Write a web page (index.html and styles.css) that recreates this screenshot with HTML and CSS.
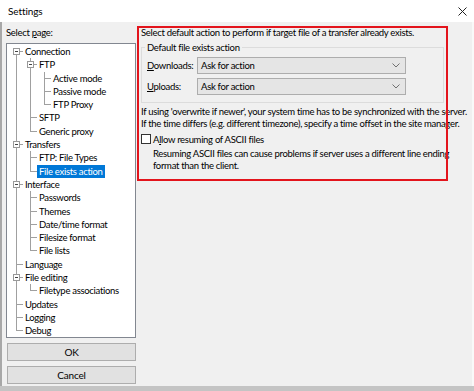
FILE: index.html
```html
<!DOCTYPE html>
<html>
<head>
<meta charset="utf-8">
<title>Settings</title>
<link rel="stylesheet" href="styles.css">
</head>
<body>
<div class="window">
  <div class="titlebar">
    <span class="title">Settings</span>
    <svg class="close" width="9" height="9" viewBox="0 0 9 9"><path d="M0.5 0.5 L8.5 8.5 M8.5 0.5 L0.5 8.5" stroke="#222" stroke-width="1" fill="none"/></svg>
  </div>
  <div class="main">
    <div class="sidebar">
      <div class="side-label">Select <u>p</u>age:</div>
      <div class="tree">
        <ul class="root">
          <li><span class="toggle"></span><span class="node">Connection</span>
            <ul>
              <li><span class="toggle"></span><span class="node">FTP</span>
                <ul>
                  <li><span class="node">Active mode</span></li>
                  <li><span class="node">Passive mode</span></li>
                  <li><span class="node">FTP Proxy</span></li>
                </ul>
              </li>
              <li><span class="node">SFTP</span></li>
              <li><span class="node">Generic proxy</span></li>
            </ul>
          </li>
          <li><span class="toggle"></span><span class="node">Transfers</span>
            <ul>
              <li><span class="node">FTP: File Types</span></li>
              <li><span class="node selected">File exists action</span></li>
            </ul>
          </li>
          <li><span class="toggle"></span><span class="node">Interface</span>
            <ul>
              <li><span class="node">Passwords</span></li>
              <li><span class="node">Themes</span></li>
              <li><span class="node">Date/time format</span></li>
              <li><span class="node">Filesize format</span></li>
              <li><span class="node">File lists</span></li>
            </ul>
          </li>
          <li><span class="node">Language</span></li>
          <li><span class="toggle"></span><span class="node">File editing</span>
            <ul>
              <li><span class="node">Filetype associations</span></li>
            </ul>
          </li>
          <li><span class="node">Updates</span></li>
          <li><span class="node">Logging</span></li>
          <li><span class="node">Debug</span></li>
        </ul>
      </div>
      <button class="btn">OK</button>
      <button class="btn">Cancel</button>
    </div>
    <div class="content">
      <p class="intro">Select default action to perform if target file of a transfer already exists.</p>
      <fieldset class="group">
        <legend>Default file exists action</legend>
        <div class="field-row">
          <span class="field-label"><u>D</u>ownloads:</span>
          <div class="select"><span>Ask for action</span><svg class="chev" width="8" height="5" viewBox="0 0 8 5"><path d="M0.5 0.5 L4 4 L7.5 0.5" stroke="#707070" stroke-width="1" fill="none"/></svg></div>
        </div>
        <div class="field-row">
          <span class="field-label"><u>U</u>ploads:</span>
          <div class="select"><span>Ask for action</span><svg class="chev" width="8" height="5" viewBox="0 0 8 5"><path d="M0.5 0.5 L4 4 L7.5 0.5" stroke="#707070" stroke-width="1" fill="none"/></svg></div>
        </div>
      </fieldset>
      <p class="note">If using 'overwrite if newer', your system time has to be synchronized with the server.<br>If the time differs (e.g. different timezone), specify a time offset in the site manager.</p>
      <div class="check-row"><span class="checkbox"></span><span>A<u>l</u>low resuming of ASCII files</span></div>
      <p class="check-note">Resuming ASCII files can cause problems if server uses a different line ending<br>format than the client.</p>
      <div class="highlight"></div>
    </div>
  </div>
  <div class="bottom-edge"></div>
</div>
</body>
</html>
```

FILE: styles.css
```css
html, body {
  margin: 0;
  padding: 0;
}
body {
  width: 474px;
  height: 391px;
  overflow: hidden;
  font-family: Lato, "Noto Sans", sans-serif;
  font-size: 9.5px;
  letter-spacing: -0.3px;
  color: #000;
  background: #f0f0f0;
}
.window {
  display: flex;
  flex-direction: column;
  height: 391px;
}
.titlebar {
  height: 22px;
  background: #fff;
  display: flex;
  align-items: center;
  justify-content: space-between;
  padding: 0 7px 0 8px;
  flex: none;
}
.title {
  font-size: 10px;
  letter-spacing: -0.1px;
}
.close {
  display: block;
}
.main {
  flex: 1;
  display: flex;
  background: #f0f0f0;
  border-left: 2px solid #a8a8a8;
  border-right: 2px solid #f9f9f9;
  overflow: hidden;
}
.sidebar {
  width: 130px;
  margin-left: 4px;
  display: flex;
  flex-direction: column;
  flex: none;
}
.side-label {
  line-height: 13px;
  padding-top: 4px;
  height: 13px;
  margin-bottom: 4px;
}
.tree {
  height: 295px;
  box-sizing: border-box;
  background: #fff;
  border: 1px solid #828790;
  padding-top: 1px;
  overflow: hidden;
}
.tree ul {
  list-style: none;
  margin: 0;
  padding: 0 0 0 14px;
}
.tree ul.root {
  padding-left: 9px;
}
.tree li {
  position: relative;
  white-space: nowrap;
  line-height: 13.3px;
}
.tree li::before {
  content: "";
  position: absolute;
  left: 0;
  top: 0;
  width: 6px;
  height: 6px;
  border-left: 1px solid #a0a0a0;
  border-bottom: 1px solid #a0a0a0;
}
.tree ul.root > li:first-child::before {
  border-left-color: transparent;
}
.tree li:not(:last-child)::after {
  content: "";
  position: absolute;
  left: 0;
  top: 6px;
  bottom: 0;
  border-left: 1px solid #a0a0a0;
}
.toggle {
  position: absolute;
  left: -3px;
  top: 3px;
  width: 7px;
  height: 7px;
  box-sizing: border-box;
  border: 1px solid #999;
  background: #fff;
  z-index: 1;
}
.toggle::after {
  content: "";
  position: absolute;
  left: 1px;
  top: 2px;
  width: 3px;
  height: 1px;
  background: #444;
}
.node {
  display: inline-block;
  vertical-align: top;
  margin-left: 7px;
  padding: 0 2px;
  height: 13.3px;
  line-height: 13.3px;
}
.node.selected {
  background: #0078d7;
  color: #fff;
}
.btn {
  display: block;
  box-sizing: border-box;
  margin: 5px 0 0 1px;
  width: 129px;
  height: 18px;
  padding: 0;
  border: 1px solid #adadad;
  background: #e1e1e1;
  font-family: inherit;
  font-size: 10px;
  letter-spacing: -0.2px;
  color: #000;
  line-height: 16px;
}
.content {
  position: relative;
  flex: 1;
  margin-left: 1px;
  padding: 4px 0 0 4px;
}
.intro {
  margin: 0;
  line-height: 13px;
  white-space: nowrap;
}
.group {
  margin: 2px 0 0 0;
  width: 303px;
  box-sizing: border-box;
  border: 1px solid #dcdcdc;
  padding: 0 5px 7px 5px;
}
.group legend {
  padding: 0 2px;
  margin-left: -2px;
  line-height: 13px;
}
.field-row {
  display: flex;
  align-items: center;
  margin-top: 4px;
}
.field-row:first-of-type {
  margin-top: 3px;
}
.field-label {
  width: 50px;
  flex: none;
}
.select {
  width: 209px;
  height: 17px;
  box-sizing: border-box;
  border: 1px solid #adadad;
  background: #e5e5e5;
  display: flex;
  align-items: center;
  justify-content: space-between;
  padding: 0 5px 0 3px;
}
.chev {
  display: block;
}
.note {
  margin: 3px 0 0 0;
  line-height: 11.7px;
  white-space: nowrap;
}
.check-row {
  display: flex;
  align-items: center;
  height: 12px;
  margin-top: 4px;
  white-space: nowrap;
}
.checkbox {
  width: 10px;
  height: 10px;
  box-sizing: border-box;
  border: 1px solid #333;
  background: #fff;
  margin-right: 2px;
  flex: none;
}
.check-note {
  margin: 3px 0 0 12px;
  line-height: 12px;
  white-space: nowrap;
}
.highlight {
  position: absolute;
  left: 0;
  top: 4px;
  width: 311px;
  height: 155px;
  box-sizing: border-box;
  border: 2px solid #e3141c;
  pointer-events: none;
}
.bottom-edge {
  height: 5px;
  background: #c4c4c4;
  flex: none;
}
```
